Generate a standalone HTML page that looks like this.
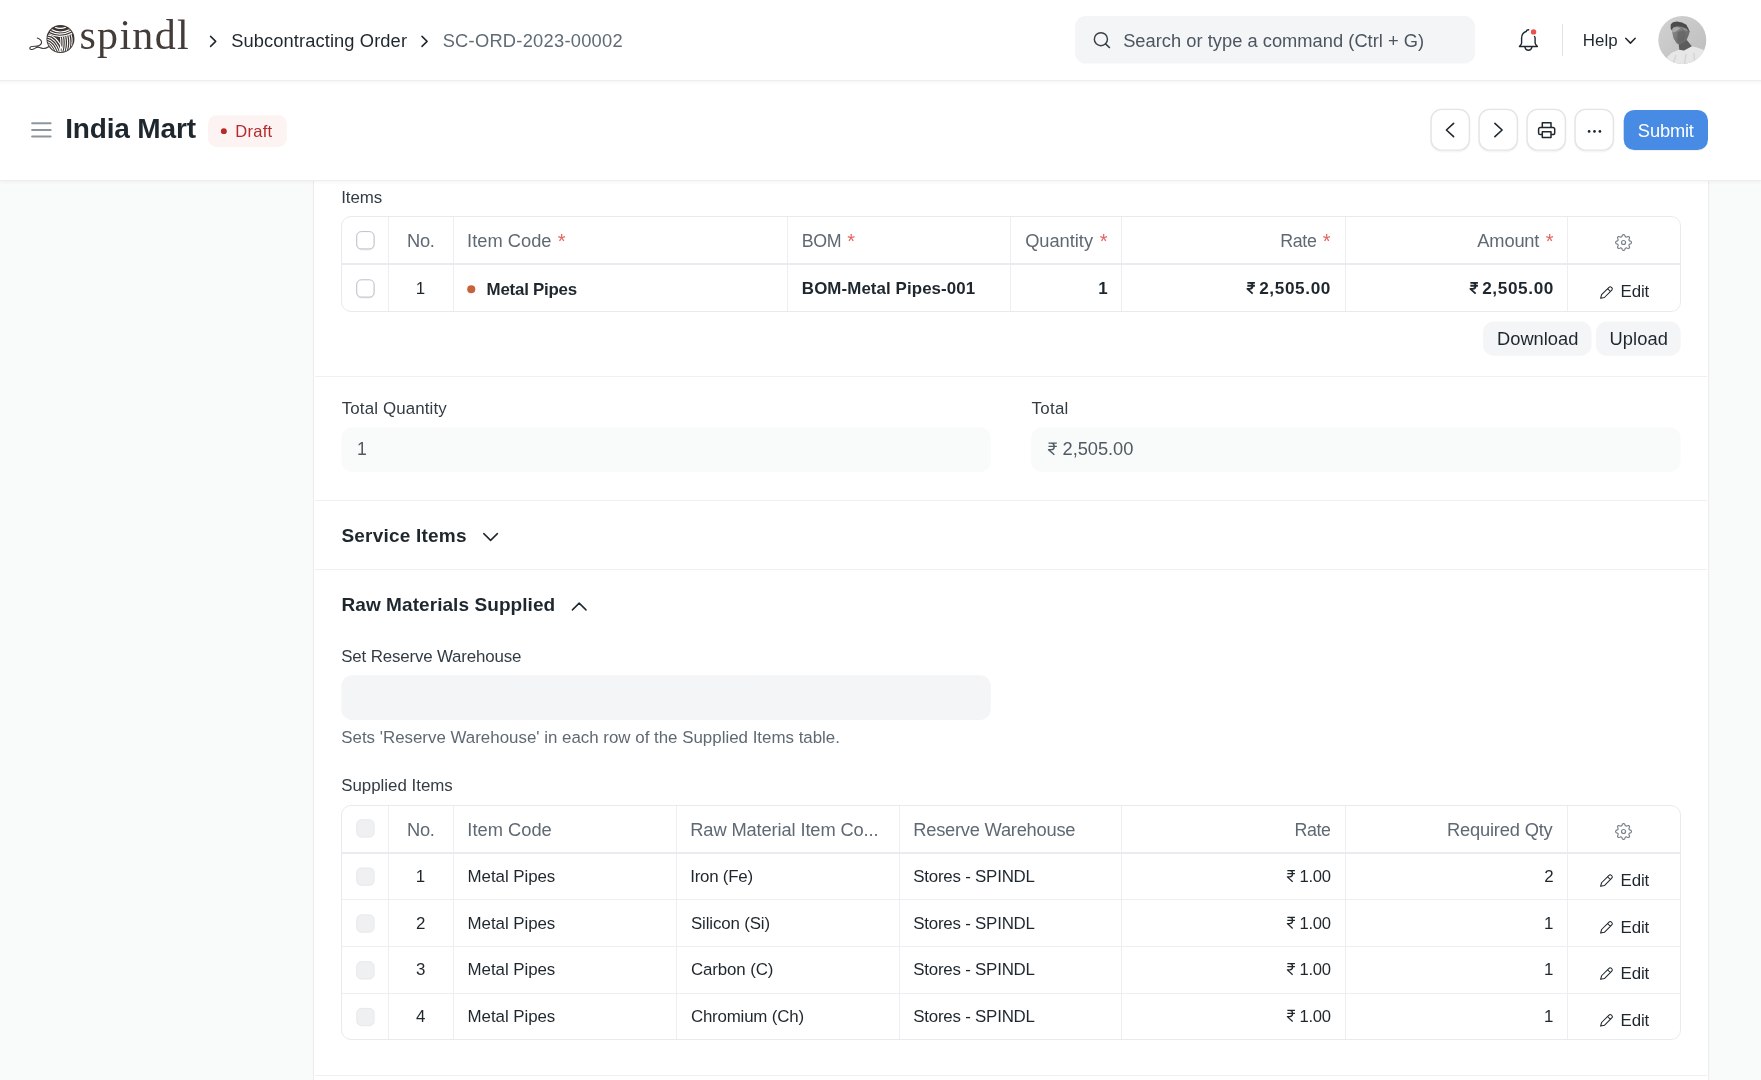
<!DOCTYPE html>
<html lang="en">
<head>
<meta charset="utf-8">
<title>India Mart - SC-ORD-2023-00002</title>
<style>
*{box-sizing:border-box;margin:0;padding:0}
html,body{width:1761px;height:1080px;overflow:hidden;background:#f9fafa}
body{position:relative;font-family:"Liberation Sans",sans-serif;color:#1f272e;-webkit-font-smoothing:antialiased}
.t{position:absolute;white-space:pre;line-height:1;font-family:"Liberation Sans",sans-serif}
.a{position:absolute}
svg{position:absolute;overflow:visible}
.ic{fill:none;stroke-linecap:round;stroke-linejoin:round}
.vl{position:absolute;width:1px;background:#eceef1}
.hl{position:absolute;height:1px;background:#eceef1}
.grid{position:absolute;border:1px solid #e8ebee;border-radius:10px;background:#fff}
</style>
</head>
<body>
<div class="a" style="left:314.4px;top:150px;width:1393.4px;height:930px;background:#fff;box-shadow:0 0 1.6px rgba(25,39,52,.22)"></div>
<div class="a" style="left:315px;top:376px;width:1392px;height:1px;background:#eef0f2"></div>
<div class="a" style="left:315px;top:500px;width:1392px;height:1px;background:#eef0f2"></div>
<div class="a" style="left:315px;top:569px;width:1392px;height:1px;background:#eef0f2"></div>
<div class="a" style="left:315px;top:1075px;width:1392px;height:1px;background:#eef0f2"></div>
<div class="grid" style="left:341px;top:216px;width:1340px;height:96px"></div>
<div class="vl" style="left:388px;top:217px;height:94px"></div>
<div class="vl" style="left:453px;top:217px;height:94px"></div>
<div class="vl" style="left:787px;top:217px;height:94px"></div>
<div class="vl" style="left:1010px;top:217px;height:94px"></div>
<div class="vl" style="left:1121px;top:217px;height:94px"></div>
<div class="vl" style="left:1345px;top:217px;height:94px"></div>
<div class="vl" style="left:1567px;top:217px;height:94px"></div>
<div class="a" style="left:342px;top:263px;width:1338px;height:2px;background:#e9ecef"></div>
<div class="grid" style="left:341px;top:805px;width:1340px;height:235px"></div>
<div class="vl" style="left:388px;top:806px;height:233px"></div>
<div class="vl" style="left:453px;top:806px;height:233px"></div>
<div class="vl" style="left:676px;top:806px;height:233px"></div>
<div class="vl" style="left:899px;top:806px;height:233px"></div>
<div class="vl" style="left:1121px;top:806px;height:233px"></div>
<div class="vl" style="left:1345px;top:806px;height:233px"></div>
<div class="vl" style="left:1567px;top:806px;height:233px"></div>
<div class="a" style="left:342px;top:852px;width:1338px;height:2px;background:#e9ecef"></div>
<div class="hl" style="left:342px;top:899px;width:1338px"></div>
<div class="hl" style="left:342px;top:946px;width:1338px"></div>
<div class="hl" style="left:342px;top:993px;width:1338px"></div>
<svg style="left:0;top:0" width="1761" height="1080" viewBox="0 0 1761 1080"><rect x="356.75" y="232.29999999999998" width="17.3" height="17.3" rx="4.6" fill="none" stroke="rgba(0,0,0,.07)" stroke-width="1.6"/><rect x="356.75" y="231.6" width="17.3" height="17.3" rx="4.6" fill="#fff" stroke="#b9c1c9" stroke-width="1"/><rect x="356.75" y="280.5" width="17.3" height="17.3" rx="4.6" fill="none" stroke="rgba(0,0,0,.07)" stroke-width="1.6"/><rect x="356.75" y="279.8" width="17.3" height="17.3" rx="4.6" fill="#fff" stroke="#b9c1c9" stroke-width="1"/><rect x="356.75" y="819.8" width="17.3" height="17.3" rx="4.6" fill="#eff0f1" stroke="#e6e8ea" stroke-width="1"/><rect x="356.75" y="868.0" width="17.3" height="17.3" rx="4.6" fill="#eff0f1" stroke="#e6e8ea" stroke-width="1"/><rect x="356.75" y="914.9" width="17.3" height="17.3" rx="4.6" fill="#eff0f1" stroke="#e6e8ea" stroke-width="1"/><rect x="356.75" y="961.7" width="17.3" height="17.3" rx="4.6" fill="#eff0f1" stroke="#e6e8ea" stroke-width="1"/><rect x="356.75" y="1008.4" width="17.3" height="17.3" rx="4.6" fill="#eff0f1" stroke="#e6e8ea" stroke-width="1"/><circle cx="471.25" cy="289.3" r="4.05" fill="#c8623a"/></svg>
<svg style="left:0;top:0" width="1761" height="1080" viewBox="0 0 1761 1080"><rect x="341.4" y="427.3" width="649.4" height="44.7" rx="10.67" fill="#f9fafa" /><rect x="1031.3" y="427.3" width="649.2" height="44.7" rx="10.67" fill="#f9fafa" /><rect x="341.4" y="675.3" width="649.4" height="44.7" rx="10.67" fill="#f4f5f6" /><rect x="1483.0" y="321.5" width="108.5" height="34.2" rx="10.67" fill="#f4f5f6" /><rect x="1596.0" y="321.5" width="84.7" height="34.2" rx="10.67" fill="#f4f5f6" /></svg>
<div class="a" style="left:0;top:0;width:1761px;height:181px;background:#fff;border-bottom:1px solid #eceef0;box-shadow:0 2px 3px rgba(0,0,0,.035)"></div>
<div class="a" style="left:0;top:80px;width:1761px;height:1px;background:#eceef0"></div>
<div class="a" style="left:0;top:81px;width:1761px;height:4px;background:linear-gradient(rgba(0,0,0,.03),rgba(0,0,0,0))"></div>
<div class="a" style="left:1562px;top:24px;width:1px;height:31.5px;background:#dfe3e6"></div>
<svg style="left:0;top:0" width="1761" height="1080" viewBox="0 0 1761 1080"><rect x="207.95" y="115.2" width="78.95" height="31.8" rx="8.5" fill="#fdf3f3"/><circle cx="223.85" cy="131.15" r="2.95" fill="#b52a2a"/><rect x="1075" y="16" width="400" height="47.6" rx="10.67" fill="#f4f5f6"/></svg>
<svg style="left:0;top:0" width="1761" height="1080" viewBox="0 0 1761 1080"><rect x="1431.1" y="110.6" width="38.3" height="40.7" rx="10.5" fill="none" stroke="rgba(0,0,0,.035)" stroke-width="2.2"/><rect x="1431.1" y="109.4" width="38.3" height="40.7" rx="10.5" fill="#fff" stroke="#e3e4e5" stroke-width="1.3"/><rect x="1479.1" y="110.6" width="38.3" height="40.7" rx="10.5" fill="none" stroke="rgba(0,0,0,.035)" stroke-width="2.2"/><rect x="1479.1" y="109.4" width="38.3" height="40.7" rx="10.5" fill="#fff" stroke="#e3e4e5" stroke-width="1.3"/><rect x="1527.1" y="110.6" width="38.3" height="40.7" rx="10.5" fill="none" stroke="rgba(0,0,0,.035)" stroke-width="2.2"/><rect x="1527.1" y="109.4" width="38.3" height="40.7" rx="10.5" fill="#fff" stroke="#e3e4e5" stroke-width="1.3"/><rect x="1575.1" y="110.6" width="38.3" height="40.7" rx="10.5" fill="none" stroke="rgba(0,0,0,.035)" stroke-width="2.2"/><rect x="1575.1" y="109.4" width="38.3" height="40.7" rx="10.5" fill="#fff" stroke="#e3e4e5" stroke-width="1.3"/><rect x="1623.7" y="110.9" width="84.3" height="40.1" rx="10.5" fill="rgba(0,0,0,.05)"/><rect x="1623.7" y="109.9" width="84.3" height="40.1" rx="10.5" fill="#488be5"/></svg>
<svg style="left:0;top:0" width="1761" height="1080" viewBox="0 0 1761 1080"><path d="M210.6 36.4 L215.7 41.4 L210.6 46.4" stroke="#1f272e" stroke-width="1.5" fill="none" class="ic" /><path d="M422 36.4 L427.1 41.4 L422 46.4" stroke="#1f272e" stroke-width="1.5" fill="none" class="ic" /><circle cx="1100.9" cy="39.2" r="6.55" stroke="#383f47" stroke-width="1.45" fill="none"/><path d="M1105.6 43.9 L1109.5 47.6" stroke="#383f47" stroke-width="1.45" fill="none" class="ic" /><path d="M1528.7 29.8 C1527.3 29.8 1526.4 30.4 1526.2 31.5 C1523.6 32.4 1521.6 34.7 1521.6 38.1 V43 C1521.6 44.2 1520.7 45.1 1519.4 46.5 H1537.4 C1536.1 45.1 1535.1 44.2 1535.1 43 V38.1 C1535.1 37.5 1534.9 37 1534.6 36.6" stroke="#1f272e" stroke-width="1.4" fill="none" class="ic" /><path d="M1524.9 47.2 C1525.3 49.2 1526.7 50.3 1528.4 50.3 C1530.1 50.3 1531.5 49.2 1531.9 47.2" stroke="#1f272e" stroke-width="1.4" fill="none" class="ic" /><circle cx="1533.55" cy="31.9" r="2.7" fill="#e8534e"/><path d="M1625.7 38.3 L1630.45 43.1 L1635.2 38.3" stroke="#1f272e" stroke-width="1.5" fill="none" class="ic" /><path d="M32.1 123.3 H50.6" stroke="#8d96a0" stroke-width="2.0" fill="none" class="ic" /><path d="M32.1 129.95 H50.6" stroke="#8d96a0" stroke-width="2.0" fill="none" class="ic" /><path d="M32.1 136.6 H50.6" stroke="#8d96a0" stroke-width="2.0" fill="none" class="ic" /><path d="M1453.6 123.3 L1446.4 130 L1453.6 136.7" stroke="#1f272e" stroke-width="1.6" fill="none" class="ic" /><path d="M1494.9 123.3 L1502.1 130 L1494.9 136.7" stroke="#1f272e" stroke-width="1.6" fill="none" class="ic" /><path d="M1542.3 127.5 V122.8 H1551 V127.5 M1542.3 134.6 H1540.2 a1.6 1.6 0 0 1 -1.6 -1.6 V129.2 a1.7 1.7 0 0 1 1.7 -1.7 H1553 a1.7 1.7 0 0 1 1.7 1.7 V133 a1.6 1.6 0 0 1 -1.6 1.6 H1551 M1542.3 131.8 H1551 V137.6 H1542.3 Z" stroke="#1f272e" stroke-width="1.5" fill="none" class="ic" /><circle cx="1589.1" cy="131.4" r="1.35" fill="#1f272e"/><circle cx="1594.5" cy="131.4" r="1.35" fill="#1f272e"/><circle cx="1599.9" cy="131.4" r="1.35" fill="#1f272e"/><path d="M483.8 533.6 L490.6 540.4 L497.4 533.6" stroke="#1f272e" stroke-width="1.5" fill="none" class="ic" /><path d="M572.4 609.9 L579.2 603.1 L586 609.9" stroke="#1f272e" stroke-width="1.5" fill="none" class="ic" /><path d="M1631.50 242.50 L1631.40 243.01 L1631.09 243.49 L1630.37 243.86 L1629.63 244.13 L1629.26 244.44 L1629.05 244.78 L1628.96 245.17 L1629.00 245.65 L1629.33 246.36 L1629.59 247.13 L1629.46 247.69 L1629.17 248.12 L1628.74 248.41 L1628.18 248.54 L1627.41 248.28 L1626.70 247.95 L1626.22 247.91 L1625.83 248.00 L1625.49 248.21 L1625.18 248.58 L1624.91 249.32 L1624.54 250.04 L1624.06 250.35 L1623.55 250.45 L1623.04 250.35 L1622.56 250.04 L1622.19 249.32 L1621.92 248.58 L1621.61 248.21 L1621.27 248.00 L1620.88 247.91 L1620.40 247.95 L1619.69 248.28 L1618.92 248.54 L1618.36 248.41 L1617.93 248.12 L1617.64 247.69 L1617.51 247.13 L1617.77 246.36 L1618.10 245.65 L1618.14 245.17 L1618.05 244.78 L1617.84 244.44 L1617.47 244.13 L1616.73 243.86 L1616.01 243.49 L1615.70 243.01 L1615.60 242.50 L1615.70 241.99 L1616.01 241.51 L1616.73 241.14 L1617.47 240.87 L1617.84 240.56 L1618.05 240.22 L1618.14 239.83 L1618.10 239.35 L1617.77 238.64 L1617.51 237.87 L1617.64 237.31 L1617.93 236.88 L1618.36 236.59 L1618.92 236.46 L1619.69 236.72 L1620.40 237.05 L1620.88 237.09 L1621.27 237.00 L1621.61 236.79 L1621.92 236.42 L1622.19 235.68 L1622.56 234.96 L1623.04 234.65 L1623.55 234.55 L1624.06 234.65 L1624.54 234.96 L1624.91 235.68 L1625.18 236.42 L1625.49 236.79 L1625.83 237.00 L1626.22 237.09 L1626.70 237.05 L1627.41 236.72 L1628.18 236.46 L1628.74 236.59 L1629.17 236.88 L1629.46 237.31 L1629.59 237.87 L1629.33 238.64 L1629.00 239.35 L1628.96 239.83 L1629.05 240.22 L1629.26 240.56 L1629.63 240.87 L1630.37 241.14 L1631.09 241.51 L1631.40 241.99 Z" stroke="#7b838a" stroke-width="1.2" fill="none" stroke-linejoin="round"/><circle cx="1623.55" cy="242.5" r="2.0" stroke="#7b838a" stroke-width="1.2" fill="none"/><path d="M1631.50 831.50 L1631.40 832.01 L1631.09 832.49 L1630.37 832.86 L1629.63 833.13 L1629.26 833.44 L1629.05 833.78 L1628.96 834.17 L1629.00 834.65 L1629.33 835.36 L1629.59 836.13 L1629.46 836.69 L1629.17 837.12 L1628.74 837.41 L1628.18 837.54 L1627.41 837.28 L1626.70 836.95 L1626.22 836.91 L1625.83 837.00 L1625.49 837.21 L1625.18 837.58 L1624.91 838.32 L1624.54 839.04 L1624.06 839.35 L1623.55 839.45 L1623.04 839.35 L1622.56 839.04 L1622.19 838.32 L1621.92 837.58 L1621.61 837.21 L1621.27 837.00 L1620.88 836.91 L1620.40 836.95 L1619.69 837.28 L1618.92 837.54 L1618.36 837.41 L1617.93 837.12 L1617.64 836.69 L1617.51 836.13 L1617.77 835.36 L1618.10 834.65 L1618.14 834.17 L1618.05 833.78 L1617.84 833.44 L1617.47 833.13 L1616.73 832.86 L1616.01 832.49 L1615.70 832.01 L1615.60 831.50 L1615.70 830.99 L1616.01 830.51 L1616.73 830.14 L1617.47 829.87 L1617.84 829.56 L1618.05 829.22 L1618.14 828.83 L1618.10 828.35 L1617.77 827.64 L1617.51 826.87 L1617.64 826.31 L1617.93 825.88 L1618.36 825.59 L1618.92 825.46 L1619.69 825.72 L1620.40 826.05 L1620.88 826.09 L1621.27 826.00 L1621.61 825.79 L1621.92 825.42 L1622.19 824.68 L1622.56 823.96 L1623.04 823.65 L1623.55 823.55 L1624.06 823.65 L1624.54 823.96 L1624.91 824.68 L1625.18 825.42 L1625.49 825.79 L1625.83 826.00 L1626.22 826.09 L1626.70 826.05 L1627.41 825.72 L1628.18 825.46 L1628.74 825.59 L1629.17 825.88 L1629.46 826.31 L1629.59 826.87 L1629.33 827.64 L1629.00 828.35 L1628.96 828.83 L1629.05 829.22 L1629.26 829.56 L1629.63 829.87 L1630.37 830.14 L1631.09 830.51 L1631.40 830.99 Z" stroke="#7b838a" stroke-width="1.2" fill="none" stroke-linejoin="round"/><circle cx="1623.55" cy="831.5" r="2.0" stroke="#7b838a" stroke-width="1.2" fill="none"/><path d="M1600.6 298.3 L1601.6 294.7 L1609 287.3 a1.7 1.7 0 0 1 2.4 0 l0.4 0.4 a1.7 1.7 0 0 1 0 2.4 L1604.4 297.5 Z M1607.6 288.7 L1610.4 291.5" stroke="#1f272e" stroke-width="1.05" fill="none" stroke-linejoin="round" stroke-linecap="round"/><path d="M1600.6 886.35 L1601.6 882.75 L1609 875.35 a1.7 1.7 0 0 1 2.4 0 l0.4 0.4 a1.7 1.7 0 0 1 0 2.4 L1604.4 885.5500000000001 Z M1607.6 876.75 L1610.4 879.5500000000001" stroke="#1f272e" stroke-width="1.05" fill="none" stroke-linejoin="round" stroke-linecap="round"/><path d="M1600.6 933.1 L1601.6 929.5 L1609 922.1 a1.7 1.7 0 0 1 2.4 0 l0.4 0.4 a1.7 1.7 0 0 1 0 2.4 L1604.4 932.3000000000001 Z M1607.6 923.5 L1610.4 926.3000000000001" stroke="#1f272e" stroke-width="1.05" fill="none" stroke-linejoin="round" stroke-linecap="round"/><path d="M1600.6 979.35 L1601.6 975.75 L1609 968.35 a1.7 1.7 0 0 1 2.4 0 l0.4 0.4 a1.7 1.7 0 0 1 0 2.4 L1604.4 978.5500000000001 Z M1607.6 969.75 L1610.4 972.5500000000001" stroke="#1f272e" stroke-width="1.05" fill="none" stroke-linejoin="round" stroke-linecap="round"/><path d="M1600.6 1026.1 L1601.6 1022.5 L1609 1015.1 a1.7 1.7 0 0 1 2.4 0 l0.4 0.4 a1.7 1.7 0 0 1 0 2.4 L1604.4 1025.3 Z M1607.6 1016.5 L1610.4 1019.3000000000001" stroke="#1f272e" stroke-width="1.05" fill="none" stroke-linejoin="round" stroke-linecap="round"/><path d="M1247.35 282.78 H1254.93 M1247.35 285.76 H1254.93 M1247.35 282.78 H1249.79 C1253.50 282.78 1253.50 288.83 1249.79 288.83 H1247.35 L1252.66 293.55" stroke="#1f272e" stroke-width="1.8" fill="none" stroke-linejoin="round" stroke-linecap="butt"/><path d="M1470.35 282.78 H1477.93 M1470.35 285.76 H1477.93 M1470.35 282.78 H1472.79 C1476.50 282.78 1476.50 288.83 1472.79 288.83 H1470.35 L1475.66 293.55" stroke="#1f272e" stroke-width="1.8" fill="none" stroke-linejoin="round" stroke-linecap="butt"/><path d="M1048.53 443.12 H1056.82 M1048.53 446.34 H1056.82 M1048.53 443.12 H1051.20 C1055.25 443.12 1055.25 449.64 1051.20 449.64 H1048.53 L1054.33 454.73" stroke="#505a62" stroke-width="1.4" fill="none" stroke-linejoin="round" stroke-linecap="butt"/><path d="M1287.35 870.60 H1294.93 M1287.35 873.69 H1294.93 M1287.35 870.60 H1289.79 C1293.50 870.60 1293.50 876.86 1289.79 876.86 H1287.35 L1292.66 881.74" stroke="#1f272e" stroke-width="1.3" fill="none" stroke-linejoin="round" stroke-linecap="butt"/><path d="M1287.35 917.35 H1294.93 M1287.35 920.44 H1294.93 M1287.35 917.35 H1289.79 C1293.50 917.35 1293.50 923.61 1289.79 923.61 H1287.35 L1292.66 928.49" stroke="#1f272e" stroke-width="1.3" fill="none" stroke-linejoin="round" stroke-linecap="butt"/><path d="M1287.35 963.60 H1294.93 M1287.35 966.69 H1294.93 M1287.35 963.60 H1289.79 C1293.50 963.60 1293.50 969.86 1289.79 969.86 H1287.35 L1292.66 974.74" stroke="#1f272e" stroke-width="1.3" fill="none" stroke-linejoin="round" stroke-linecap="butt"/><path d="M1287.35 1010.35 H1294.93 M1287.35 1013.44 H1294.93 M1287.35 1010.35 H1289.79 C1293.50 1010.35 1293.50 1016.61 1289.79 1016.61 H1287.35 L1292.66 1021.49" stroke="#1f272e" stroke-width="1.3" fill="none" stroke-linejoin="round" stroke-linecap="butt"/><defs><clipPath id="ballclip"><circle cx="60.45" cy="39" r="13.1"/></clipPath><clipPath id="avclip"><circle cx="1682.3" cy="40" r="24"/></clipPath><linearGradient id="facegr" x1="0" y1="0" x2="1" y2="1"><stop offset="0" stop-color="#8e8e8e"/><stop offset="1" stop-color="#5e5e5e"/></linearGradient><linearGradient id="avbg" x1="0" y1="0" x2="1" y2="1"><stop offset="0" stop-color="#d2d2d2"/><stop offset="1" stop-color="#bcbcbc"/></linearGradient></defs><g>
<path d="M37.3 38.1 C40 39 42.2 41 41.5 43 C40.8 45.2 38 46.3 35 46.3 C32.5 46.3 29.9 46.5 29.8 48.2 C29.7 49.8 32.5 49.9 34.5 48.6 C36 47.6 37.5 46.8 39.5 47.6 C42.5 48.9 45.5 48.8 48.6 46.7" stroke="#3d3532" stroke-width="1.1" fill="none" stroke-linecap="round"/>
<circle cx="60.45" cy="39" r="14" fill="#3d3532"/>
<g stroke="#fff" stroke-width="1.05" fill="none" clip-path="url(#ballclip)">
<path d="M51.5 29.5 Q60 34.5 70 29.5"/><path d="M50 31.5 Q60 37 71.5 31"/><path d="M49 33.6 Q60 39.5 73 32.8"/><path d="M55 27.2 Q60 29.5 66 27.2"/>
<path d="M62.5 37 Q64 45 61.5 53"/><path d="M64.6 36.4 Q66.4 45 63.6 53"/><path d="M66.7 35.7 Q68.8 44 65.9 52.5"/><path d="M68.8 34.8 Q71.2 43 68.3 51.5"/><path d="M70.9 33.8 Q73.4 41 70.8 49.5"/><path d="M60.4 37.4 Q61.6 44 59.6 53"/>
<path d="M47 37 Q56 38 61 53"/><path d="M46.7 39.2 Q54.5 40.5 58.8 53"/><path d="M46.8 41.4 Q53 43 56.6 53"/><path d="M47.2 43.6 Q51.5 45.5 54.4 53"/><path d="M48 45.8 Q50.5 47.5 52.2 52"/><path d="M47.6 35 Q57 35.5 62.6 50"/>
</g></g><g clip-path="url(#avclip)">
<rect x="1658" y="16" width="49" height="49" fill="url(#avbg)"/>
<path d="M1665 68 L1667.6 56.6 L1672 52.6 L1679 49.8 L1684 50.4 L1691.8 46.2 L1697 47.4 L1703.6 49.8 L1708 68 Z" fill="#e7e7e7"/>
<path d="M1672 68 L1676 55 M1684 68 L1686 54 M1695 68 L1694 53" stroke="#d6d6d6" stroke-width="1.6" fill="none"/>
<path d="M1678.6 43.8 L1686.8 40 L1691.8 46.3 L1684 50.5 L1679.3 49.8 Z" fill="#5c5c5c"/>
<path d="M1671.8 28 L1672.3 33 L1673.6 38.4 L1676.8 43.4 L1680 44.6 L1686.2 41 L1688.6 35.2 L1689.8 31.4 L1688 27.5 L1680 25.5 L1673.5 26.2 Z" fill="url(#facegr)"/>
<path d="M1677.5 32 L1683.5 30.5 L1686 33.5 L1684 39.5 L1679.8 43.2 L1677.4 40.5 Z" fill="#666" opacity=".75"/>
<path d="M1672 28.2 L1677 27 L1680.5 28.2 L1676 31.6 L1672.6 32.6 Z" fill="#a9a9a9"/>
<path d="M1682.4 27.6 L1687 28.4 L1688.2 31 L1684.4 30.2 Z" fill="#8f8f8f"/>
<path d="M1670.6 28.2 L1670.8 24.2 L1673 22.2 L1677 21.5 L1682 22.4 L1686.4 24.8 L1688.2 28.4 L1688.8 31.4 L1686.4 28.6 L1682 26.7 L1677 26.3 L1673.2 27.2 L1671.6 30.4 Z" fill="#4b4b4b"/>
</g></svg>
<div id="txt" style="position:absolute;left:0;top:0;width:1761px;height:1080px;will-change:transform">
<span class="t" style="left:79.48px;top:14.00px;font-size:42.0px;color:#443c39;letter-spacing:1.295px;font-family:'Liberation Serif',serif;">spindl</span>
<span class="t" style="left:231.17px;top:32.00px;font-size:18.3px;color:#1f272e;letter-spacing:0.109px;">Subcontracting Order</span>
<span class="t" style="left:442.67px;top:32.00px;font-size:18.3px;color:#5f6b75;letter-spacing:0.260px;">SC-ORD-2023-00002</span>
<span class="t" style="left:1123.17px;top:32.00px;font-size:18.3px;color:#4c5560;letter-spacing:0.022px;">Search or type a command (Ctrl + G)</span>
<span class="t" style="left:1582.81px;top:33.00px;font-size:16.9px;color:#1f272e;letter-spacing:0.015px;">Help</span>
<span class="t" style="left:65.13px;top:115.00px;font-size:28px;color:#1f272e;font-weight:700;letter-spacing:-0.147px;">India Mart</span>
<span class="t" style="left:235.15px;top:123.00px;font-size:16.5px;color:#b52a2a;letter-spacing:0.327px;">Draft</span>
<span class="t" style="left:1637.87px;top:122.00px;font-size:18.3px;color:#ffffff;letter-spacing:-0.168px;">Submit</span>
<span class="t" style="left:341.19px;top:190.00px;font-size:16.9px;color:#333c44;letter-spacing:-0.044px;">Items</span>
<span class="t" style="left:407.00px;top:232.00px;font-size:18.3px;color:#5f6973;letter-spacing:-0.291px;">No.</span>
<span class="t" style="left:467.06px;top:232.00px;font-size:18.3px;color:#5f6973;letter-spacing:0.014px;">Item Code</span>
<span class="t" style="left:557.78px;top:231.00px;font-size:20px;color:#e4645f;">*</span>
<span class="t" style="left:801.69px;top:233.00px;font-size:17.8px;color:#5f6973;letter-spacing:-0.323px;">BOM</span>
<span class="t" style="left:847.18px;top:231.00px;font-size:20px;color:#e4645f;">*</span>
<span class="t" style="left:1025.13px;top:232.00px;font-size:18.3px;color:#5f6973;letter-spacing:-0.027px;">Quantity</span>
<span class="t" style="left:1099.73px;top:231.00px;font-size:20px;color:#e4645f;">*</span>
<span class="t" style="left:1280.24px;top:233.00px;font-size:17.82px;color:#5f6973;letter-spacing:-0.329px;">Rate</span>
<span class="t" style="left:1322.73px;top:231.00px;font-size:20px;color:#e4645f;">*</span>
<span class="t" style="left:1477.36px;top:232.00px;font-size:18.3px;color:#5f6973;letter-spacing:-0.189px;">Amount</span>
<span class="t" style="left:1545.73px;top:231.00px;font-size:20px;color:#e4645f;">*</span>
<span class="t" style="left:415.67px;top:281.00px;font-size:16.9px;color:#1f272e;">1</span>
<span class="t" style="left:486.62px;top:282.00px;font-size:16.9px;color:#1f272e;font-weight:700;letter-spacing:-0.241px;">Metal Pipes</span>
<span class="t" style="left:801.87px;top:281.00px;font-size:16.9px;color:#1f272e;font-weight:700;letter-spacing:0.084px;">BOM-Metal Pipes-001</span>
<span class="t" style="left:1098.26px;top:281.00px;font-size:16.9px;color:#1f272e;font-weight:700;">1</span>
<span class="t" style="left:1259.15px;top:280.00px;font-size:17.2px;color:#1f272e;font-weight:700;letter-spacing:0.621px;">2,505.00</span>
<span class="t" style="left:1482.15px;top:280.00px;font-size:17.2px;color:#1f272e;font-weight:700;letter-spacing:0.621px;">2,505.00</span>
<span class="t" style="left:1620.61px;top:284.00px;font-size:16.9px;color:#1f272e;letter-spacing:-0.133px;">Edit</span>
<span class="t" style="left:1497.00px;top:330.00px;font-size:18.3px;color:#1f272e;letter-spacing:0.010px;">Download</span>
<span class="t" style="left:1609.59px;top:330.00px;font-size:18.3px;color:#1f272e;letter-spacing:0.071px;">Upload</span>
<span class="t" style="left:341.72px;top:401.00px;font-size:16.9px;color:#333c44;letter-spacing:0.133px;">Total Quantity</span>
<span class="t" style="left:1031.62px;top:401.00px;font-size:16.9px;color:#333c44;letter-spacing:0.256px;">Total</span>
<span class="t" style="left:356.96px;top:441.00px;font-size:17.6px;color:#505a62;">1</span>
<span class="t" style="left:1062.58px;top:440.00px;font-size:18.3px;color:#505a62;letter-spacing:-0.048px;">2,505.00</span>
<span class="t" style="left:341.45px;top:526.00px;font-size:19.0px;color:#1f272e;font-weight:700;letter-spacing:0.208px;">Service Items</span>
<span class="t" style="left:341.48px;top:595.00px;font-size:19.0px;color:#1f272e;font-weight:700;letter-spacing:0.071px;">Raw Materials Supplied</span>
<span class="t" style="left:341.23px;top:649.00px;font-size:16.9px;color:#333c44;letter-spacing:-0.159px;">Set Reserve Warehouse</span>
<span class="t" style="left:341.23px;top:730.00px;font-size:16.9px;color:#5f6973;">Sets &#x27;Reserve Warehouse&#x27; in each row of the Supplied Items table.</span>
<span class="t" style="left:341.23px;top:778.00px;font-size:16.9px;color:#333c44;letter-spacing:-0.012px;">Supplied Items</span>
<span class="t" style="left:407.00px;top:821.00px;font-size:18.3px;color:#5f6973;letter-spacing:-0.291px;">No.</span>
<span class="t" style="left:467.31px;top:821.00px;font-size:18.3px;color:#5f6973;letter-spacing:0.014px;">Item Code</span>
<span class="t" style="left:690.25px;top:821.00px;font-size:18.3px;color:#5f6973;letter-spacing:-0.119px;">Raw Material Item Co...</span>
<span class="t" style="left:913.25px;top:821.00px;font-size:18.3px;color:#5f6973;letter-spacing:-0.232px;">Reserve Warehouse</span>
<span class="t" style="left:1294.39px;top:822.00px;font-size:17.82px;color:#5f6973;letter-spacing:-0.329px;">Rate</span>
<span class="t" style="left:1447.00px;top:821.00px;font-size:18.3px;color:#5f6973;letter-spacing:-0.180px;">Required Qty</span>
<span class="t" style="left:415.67px;top:869.00px;font-size:16.9px;color:#1f272e;">1</span>
<span class="t" style="left:467.61px;top:869.00px;font-size:16.9px;color:#1f272e;letter-spacing:-0.055px;">Metal Pipes</span>
<span class="t" style="left:690.19px;top:869.00px;font-size:16.9px;color:#1f272e;letter-spacing:-0.239px;">Iron (Fe)</span>
<span class="t" style="left:913.23px;top:869.00px;font-size:16.9px;color:#1f272e;letter-spacing:-0.219px;">Stores - SPINDL</span>
<span class="t" style="left:1299.53px;top:869.00px;font-size:16.62px;color:#1f272e;letter-spacing:-0.321px;">1.00</span>
<span class="t" style="left:1544.14px;top:869.00px;font-size:16.9px;color:#1f272e;">2</span>
<span class="t" style="left:1620.61px;top:873.00px;font-size:16.9px;color:#1f272e;letter-spacing:-0.133px;">Edit</span>
<span class="t" style="left:415.90px;top:916.00px;font-size:16.9px;color:#1f272e;">2</span>
<span class="t" style="left:467.61px;top:916.00px;font-size:16.9px;color:#1f272e;letter-spacing:-0.055px;">Metal Pipes</span>
<span class="t" style="left:690.98px;top:916.00px;font-size:16.9px;color:#1f272e;letter-spacing:-0.150px;">Silicon (Si)</span>
<span class="t" style="left:913.23px;top:916.00px;font-size:16.9px;color:#1f272e;letter-spacing:-0.219px;">Stores - SPINDL</span>
<span class="t" style="left:1299.53px;top:916.00px;font-size:16.62px;color:#1f272e;letter-spacing:-0.321px;">1.00</span>
<span class="t" style="left:1544.12px;top:916.00px;font-size:16.9px;color:#1f272e;">1</span>
<span class="t" style="left:1620.61px;top:920.00px;font-size:16.9px;color:#1f272e;letter-spacing:-0.133px;">Edit</span>
<span class="t" style="left:415.95px;top:962.00px;font-size:16.9px;color:#1f272e;">3</span>
<span class="t" style="left:467.61px;top:962.00px;font-size:16.9px;color:#1f272e;letter-spacing:-0.055px;">Metal Pipes</span>
<span class="t" style="left:690.89px;top:962.00px;font-size:16.9px;color:#1f272e;letter-spacing:-0.110px;">Carbon (C)</span>
<span class="t" style="left:913.23px;top:962.00px;font-size:16.9px;color:#1f272e;letter-spacing:-0.219px;">Stores - SPINDL</span>
<span class="t" style="left:1299.53px;top:962.00px;font-size:16.62px;color:#1f272e;letter-spacing:-0.321px;">1.00</span>
<span class="t" style="left:1544.12px;top:962.00px;font-size:16.9px;color:#1f272e;">1</span>
<span class="t" style="left:1620.61px;top:966.00px;font-size:16.9px;color:#1f272e;letter-spacing:-0.133px;">Edit</span>
<span class="t" style="left:415.95px;top:1009.00px;font-size:16.9px;color:#1f272e;">4</span>
<span class="t" style="left:467.61px;top:1009.00px;font-size:16.9px;color:#1f272e;letter-spacing:-0.055px;">Metal Pipes</span>
<span class="t" style="left:690.89px;top:1009.00px;font-size:16.9px;color:#1f272e;letter-spacing:-0.190px;">Chromium (Ch)</span>
<span class="t" style="left:913.23px;top:1009.00px;font-size:16.9px;color:#1f272e;letter-spacing:-0.219px;">Stores - SPINDL</span>
<span class="t" style="left:1299.53px;top:1009.00px;font-size:16.62px;color:#1f272e;letter-spacing:-0.321px;">1.00</span>
<span class="t" style="left:1544.12px;top:1009.00px;font-size:16.9px;color:#1f272e;">1</span>
<span class="t" style="left:1620.61px;top:1013.00px;font-size:16.9px;color:#1f272e;letter-spacing:-0.133px;">Edit</span>
</div>
</body>
</html>
